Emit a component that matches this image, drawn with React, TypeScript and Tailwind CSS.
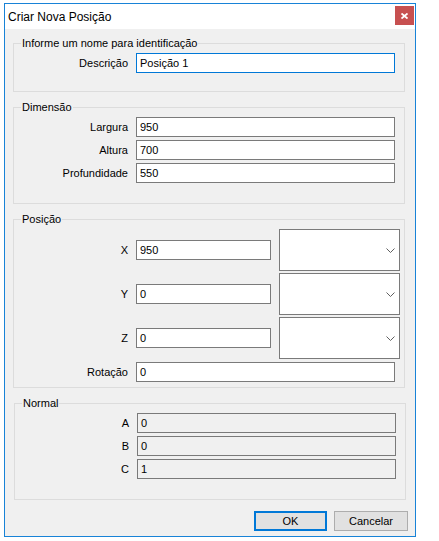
import React from "react";

const font = { fontFamily: '"Liberation Sans", Arial, sans-serif' };

function TextBox({ value, className = "", focused = false, disabled = false }: { value: string; className?: string; focused?: boolean; disabled?: boolean }) {
  return (
    <div
      className={`h-[20px] border flex items-center pl-[3px] text-[11px] leading-none text-black ${
        focused ? "border-[#0078d7]" : "border-[#7a7a7a]"
      } ${disabled ? "bg-[#f0f0f0]" : "bg-white"} ${className}`}
    >
      {value}
    </div>
  );
}

function Label({ text, className = "w-[114px]" }: { text: string; className?: string }) {
  return <div className={`${className} shrink-0 text-right text-[11px] leading-none text-black`}>{text}</div>;
}

function Group({ title, className, children }: { title: string; className: string; children: React.ReactNode }) {
  return (
    <div className={`relative border border-[#dcdcdc] ${className}`}>
      <span className="absolute left-[7px] -top-[8px] bg-[#f0f0f0] px-[1px] text-[11px] leading-[15px] text-black">{title}</span>
      {children}
    </div>
  );
}

function Chevron() {
  return (
    <svg width="9" height="5" viewBox="0 0 9 5" className="block">
      <polyline points="0.5,0.5 4.5,4.5 8.5,0.5" fill="none" stroke="#606060" strokeWidth="1" />
    </svg>
  );
}

function Combo() {
  return (
    <div className="w-[121px] h-[42px] border border-[#7a7a7a] bg-white flex items-center justify-end pr-[4px]">
      <Chevron />
    </div>
  );
}

export default function App() {
  return (
    <div className="w-[439px] h-[541px] bg-white pl-[4px] pt-[3px]" style={font}>
      <div className="w-[412px] h-[534px] border border-[#1883d7] bg-[#f0f0f0] flex flex-col">
        <div className="h-[25px] bg-white flex items-center justify-between pl-[3px] pr-[1px]">
          <span className="text-[12px] text-black leading-none">Criar Nova Posição</span>
          <div className="w-[19px] h-[19px] bg-[#c75050] flex items-center justify-center self-start mt-[2px]">
            <svg width="7" height="6" viewBox="0 0 7 6">
              <path d="M0.5 0.5 L6.5 5.5 M6.5 0.5 L0.5 5.5" stroke="white" strokeWidth="1.8" />
            </svg>
          </div>
        </div>
        <div className="flex flex-col pl-[8px] pt-[14px] gap-[15px]">
          <Group title="Informe um nome para identificação" className="w-[392px] h-[49px]">
            <div className="flex items-center pt-[9px]">
              <Label text="Descrição" />
              <div className="w-[8px]" />
              <TextBox value="Posição 1" focused className="w-[259px]" />
            </div>
          </Group>
          <Group title="Dimensão" className="w-[392px] h-[97px]">
            <div className="flex flex-col gap-[3px] pt-[9px]">
              {[
                ["Largura", "950"],
                ["Altura", "700"],
                ["Profundidade", "550"],
              ].map(([l, v]) => (
                <div key={l} className="flex items-center">
                  <Label text={l} />
                  <div className="w-[8px]" />
                  <TextBox value={v} className="w-[259px]" />
                </div>
              ))}
            </div>
          </Group>
          <Group title="Posição" className="w-[392px] h-[169px]">
            <div className="flex flex-col pt-[9px]">
              <div className="flex flex-col gap-[2px]">
                {[
                  ["X", "950"],
                  ["Y", "0"],
                  ["Z", "0"],
                ].map(([l, v]) => (
                  <div key={l} className="flex items-center">
                    <Label text={l} />
                    <div className="w-[8px]" />
                    <TextBox value={v} className="w-[135px]" />
                    <div className="w-[8px]" />
                    <Combo />
                  </div>
                ))}
              </div>
              <div className="flex items-center mt-[3px]">
                <Label text="Rotação" />
                <div className="w-[8px]" />
                <TextBox value="0" className="w-[259px]" />
              </div>
            </div>
          </Group>
          <Group title="Normal" className="w-[392px] h-[97px] ml-[1px]">
            <div className="flex flex-col gap-[3px] pt-[9px]">
              {[
                ["A", "0"],
                ["B", "0"],
                ["C", "1"],
              ].map(([l, v]) => (
                <div key={l} className="flex items-center">
                  <Label text={l} />
                  <div className="w-[8px]" />
                  <TextBox value={v} disabled className="w-[259px]" />
                </div>
              ))}
            </div>
          </Group>
        </div>
        <div className="flex justify-end gap-[7px] pr-[7px] mt-[11px]">
          <div className="w-[73px] h-[20px] border-2 border-[#0078d7] bg-[#e1e1e1] flex items-center justify-center text-[11px] leading-none text-black">
            OK
          </div>
          <div className="w-[74px] h-[20px] border border-[#adadad] bg-[#e1e1e1] flex items-center justify-center text-[11px] leading-none text-black">
            Cancelar
          </div>
        </div>
      </div>
    </div>
  );
}
